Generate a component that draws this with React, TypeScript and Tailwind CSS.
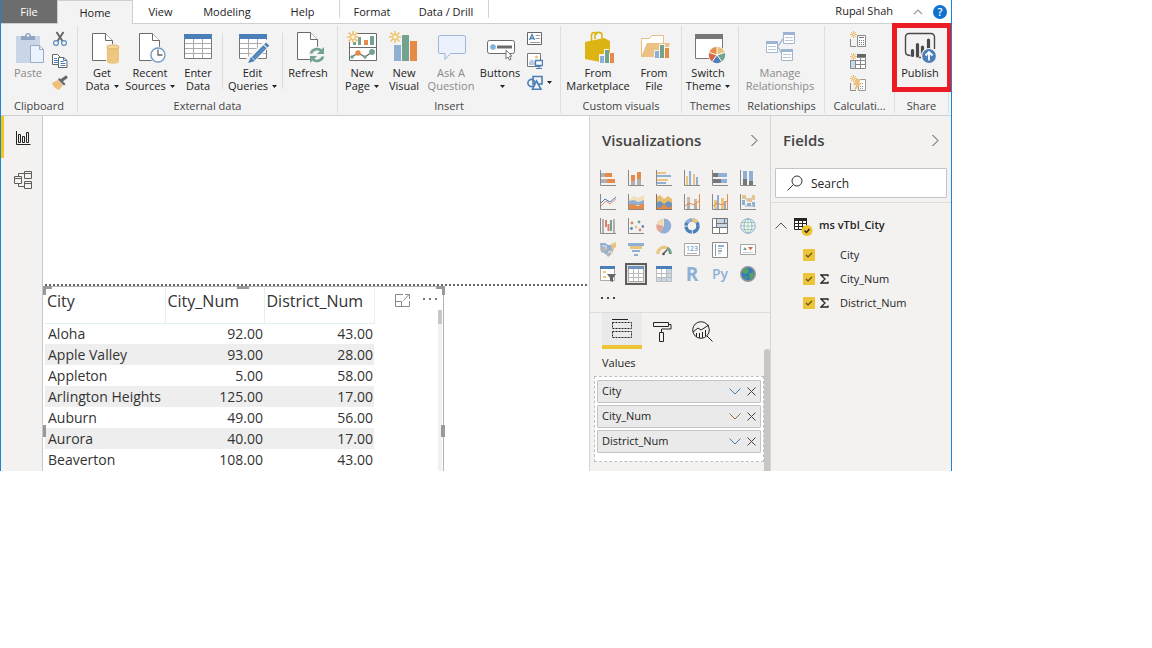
import type { ReactNode } from "react";

type Kids = { children: ReactNode };

const BLUE = "#4a7fb8";
const SKY = "#8fb0d4";
const GREEN = "#73a38f";
const ORANGE = "#e58b47";
const SAND = "#ecc47e";

/* ---------- icon helpers ---------- */

function Big({ children }: Kids) {
  return (
    <svg viewBox="0 0 36 36" className="-mb-px h-9 w-9 shrink-0" fill="none" aria-hidden="true">
      {children}
    </svg>
  );
}

function Small({ children }: Kids) {
  return (
    <svg viewBox="0 0 16 16" className="h-4 w-4 shrink-0" fill="none" aria-hidden="true">
      {children}
    </svg>
  );
}

function Caret() {
  return (
    <svg viewBox="0 0 5 3" className="mb-0.5 ml-1 inline h-[3px] w-[5px]" aria-hidden="true">
      <path d="M0 0h5L2.5 3z" fill="#222" />
    </svg>
  );
}

function Sun({ x, y }: { x: number; y: number }) {
  return (
    <g transform={`translate(${x} ${y})`} stroke="#eec26d" strokeWidth="1.6">
      <path d="M0-6v3.4M0 2.6V6M-6 0h3.4M2.6 0H6M-4.4-4.4l2.4 2.4M2 2l2.4 2.4M-4.4 4.4L-2 2M2-2l2.4-2.4" />
      <circle r="2.3" fill="#fff6e2" strokeWidth="1.2" />
    </g>
  );
}

function TinySun() {
  return (
    <g stroke="#eeb868" strokeWidth="1">
      <path d="M3.5 0v2M3.5 5v2M0 3.5h2M5 3.5h2M1 1l1.5 1.5M4.5 4.5L6 6M1 6l1.5-1.5M4.5 2.5L6 1" />
      <circle cx="3.5" cy="3.5" r="1.2" />
    </g>
  );
}

function Page({ x, y }: { x: number; y: number }) {
  return (
    <g transform={`translate(${x} ${y})`} stroke="#6b6b6b">
      <path d="M.5.5h13l7 7v20H.5z" fill="#fff" />
      <path d="M13.5.5v7h7" fill="#fff" />
    </g>
  );
}

function Grid() {
  return (
    <>
      <path d="M4.5 3.5h27v24h-27z" fill="#fff" stroke="#777" />
      <path d="M5 12.5h26M5 17.5h26M5 22.5h26M13.5 8v19M22.5 8v19" stroke="#aaa" />
      <path d="M4 3h28v5H4z" fill={BLUE} />
    </>
  );
}

/* ---------- ribbon icons ---------- */

const PasteIcon = (
  <Big>
    <path d="M6 5h24v27H6z" fill="#cad6e8" />
    <path d="M11 9V5h4c0-4 6-4 6 0h4v4z" fill="#8fa5c3" />
    <circle cx="18" cy="4.5" r="1.3" fill="#eef3fa" />
    <path d="M20.5 14.5h9l4 4v13h-13z" fill="#ebf2fd" stroke="#98abc8" />
    <path d="M29.5 14.5v4h4" stroke="#98abc8" />
  </Big>
);
const CutIcon = (
  <Small>
    <path d="M4.5 1l6.3 9.5M11.5 1L5.2 10.5" stroke="#666" strokeWidth="2" />
    <circle cx="4" cy="12" r="2.4" stroke="#5a8fc0" strokeWidth="1.2" fill="#f3f3f3" />
    <circle cx="12" cy="12" r="2.4" stroke="#5a8fc0" strokeWidth="1.2" fill="#f3f3f3" />
  </Small>
);
const CopyIcon = (
  <Small>
    <path d="M.5 1.5h5l3 3v7h-8z" fill="#fff" stroke="#666" />
    <path d="M2 5.5h3M2 7.5h4M2 9.5h4" stroke={BLUE} />
    <path d="M6.5 4.5h5l3.5 3v7H6.5z" fill="#fff" stroke="#666" />
    <path d="M11.5 4.5v3H15M8.5 8.5h3M8.5 10.5h5M8.5 12.5h5" stroke={BLUE} />
  </Small>
);
const BrushIcon = (
  <Small>
    <path d="M6 5L0 8c1 4 4 6 7 7l4-5z" fill="#eec07c" />
    <path d="M6 4.5l1.5-1.5 6 6L12 10.5z" fill="#666" />
    <path d="M9.5 5.5l5.5-4" stroke="#666" strokeWidth="3" />
  </Small>
);
const GetDataIcon = (
  <Big>
    <Page x={8} y={2} />
    <path d="M22 13h14v20H22z" fill="#f3f3f3" />
    <path d="M23 16v14.5c0 3 12 3 12 0V16z" fill="#edc67f" />
    <ellipse cx="29" cy="16" rx="6" ry="2" fill="#f5d79f" stroke="#e0b25f" />
  </Big>
);
const RecentIcon = (
  <Big>
    <Page x={7} y={2} />
    <circle cx="26" cy="24" r="8.5" fill="#f3f3f3" />
    <circle cx="26" cy="24" r="7" fill="#fff" stroke="#6d9ac6" strokeWidth="1.3" />
    <path d="M26 18.5V24h4.5" stroke="#666" strokeWidth="1.3" />
  </Big>
);
const EnterIcon = (
  <Big>
    <Grid />
  </Big>
);
const EditIcon = (
  <Big>
    <Grid />
    <path d="M13 31.5L34 11" stroke="#f3f3f3" strokeWidth="8" />
    <path d="M18.5 27.5L30 15.7" stroke={BLUE} strokeWidth="4.5" />
    <path d="M30.8 15l1.9-1.9" stroke={BLUE} strokeWidth="4.5" />
    <path d="M16 26l4 4-7 2z" fill={BLUE} />
    <path d="M20 26.5L29.5 17" stroke="#7ea6cf" />
  </Big>
);
const RefreshIcon = (
  <Big>
    <Page x={7} y={1} />
    <circle cx="27" cy="24" r="8.5" fill="#f3f3f3" />
    <path d="M21 22.5a6.2 6.2 0 0 1 10.5-2.5M33 25.5a6.2 6.2 0 0 1-10.5 2.5" stroke={GREEN} strokeWidth="2.6" />
    <path d="M34 16v7h-7zM20 32v-7h7z" fill={GREEN} />
  </Big>
);
const NewPageIcon = (
  <Big>
    <path d="M5.5 2.5h27v27h-27z" fill="#fff" stroke="#6b6b6b" />
    <path d="M6 16.5h26" stroke="#6b6b6b" />
    <path d="M14 6h3v8h-3zM26 5h4v9h-4zM9 11h3v3H9z" fill={GREEN} />
    <path d="M20 9h4v5h-4z" fill={ORANGE} />
    <path d="M8 26l6-4 7 4 7-5" stroke="#666" strokeWidth="1.2" />
    <circle cx="14" cy="22" r="2.7" fill={ORANGE} />
    <circle cx="28" cy="21" r="2.9" fill={GREEN} />
    <circle cx="8" cy="26" r="1.8" fill={GREEN} />
    <circle cx="21" cy="26" r="1.8" fill={GREEN} />
    <circle cx="8" cy="5.5" r="6" fill="#f3f3f3" />
    <Sun x={9} y={6} />
  </Big>
);
const NewVisualIcon = (
  <Big>
    <path d="M8 14h7v16H8z" fill="#8fafd3" />
    <path d="M16 4h7v26h-7z" fill={GREEN} />
    <path d="M24 10h7v20h-7z" fill={ORANGE} />
    <Sun x={9} y={6} />
  </Big>
);
const AskIcon = (
  <Big>
    <path d="M7 4.5h24a1.5 1.5 0 0 1 1.5 1.5v15a1.5 1.5 0 0 1-1.5 1.5H17.5L12 28.5v-6H7A1.5 1.5 0 0 1 5.5 21V6A1.5 1.5 0 0 1 7 4.5z" fill="#ebf2fd" stroke="#9fb5d6" />
  </Big>
);
const ButtonsIcon = (
  <Big>
    <rect x="5.5" y="9.5" width="27" height="13" rx="2" fill="#fff" stroke="#6b6b6b" />
    <circle cx="11" cy="16" r="2.8" fill="#7fb0da" />
    <path d="M15 14.5h15v3H15z" fill="#6b6b6b" />
    <path d="M24 19v9l2-2 1.5 3 1.5-.8-1.5-3H30z" fill="#fff" stroke="#777" />
  </Big>
);
const TextBoxIcon = (
  <Small>
    <path d="M.5 1.5h14v12H.5z" fill="#fff" stroke="#666" />
    <path d="M2.5 9L5 3.5 7.5 9M3.5 7.5h3" stroke={BLUE} strokeWidth="1.3" />
    <path d="M8.5 4.5H13M8.5 7.5H13M3 11.5h10" stroke="#999" />
  </Small>
);
const ImageIcon = (
  <Small>
    <path d="M.5.5h13v13H.5z" fill="#fff" stroke="#777" />
    <path d="M2 12V9l2.5-3L8 9v3z" fill="#bccbe0" />
    <circle cx="9.5" cy="4" r="1.5" fill="#eec07c" />
    <path d="M8.5 7.5h7v5h-7z" fill="#fff" stroke={BLUE} strokeWidth="1.4" />
    <path d="M12 13v2M9 15.5h6" stroke={BLUE} />
  </Small>
);
const ShapesIcon = (
  <Small>
    <path d="M6 1.5h9v7.5H6z" stroke={BLUE} strokeWidth="1.6" />
    <circle cx="4.5" cy="8" r="3.6" stroke={BLUE} strokeWidth="1.6" />
    <path d="M9.5 6l4.5 8.2H5.5z" fill="#f3f3f3" stroke={BLUE} strokeWidth="1.6" />
  </Small>
);
const MarketIcon = (
  <Big>
    <path d="M11.5 10V4.5c0-4 5-4 5-.5M15 8V4c0-3.5 7-3.5 7 0v4" stroke="#dcb414" strokeWidth="1.6" />
    <path d="M5 11l19-4 6 3v15l-10 6-15-3z" fill="#dcb414" />
    <path d="M19 23h5v-5h5v4h6v11H19z" fill="#f3f3f3" />
    <path d="M20 25h4v7h-4z" fill={SKY} />
    <path d="M25 19h4v13h-4z" fill={GREEN} />
    <path d="M30 22h4v10h-4z" fill={ORANGE} />
  </Big>
);
const FileIcon = (
  <Big>
    <path d="M5.5 25.5v-18h8l2-3h12v21z" fill="#fff" stroke="#e9c083" />
    <path d="M5 26l6-14h23l-4 14z" fill="#ebc184" />
    <path d="M18 19h5v-6h6v3h5v12H18z" fill="#f3f3f3" />
    <path d="M19 20h4v7h-4z" fill={SKY} />
    <path d="M24 14h4v13h-4z" fill={GREEN} />
    <path d="M29 17h4v10h-4z" fill={ORANGE} />
  </Big>
);
const ThemeIcon = (
  <Big>
    <path d="M5.5 3.5h27v24h-27z" fill="#fff" stroke="#777" />
    <path d="M5 3h28v5H5z" fill="#777" />
    <circle cx="27" cy="24" r="9" fill="#f3f3f3" />
    <path d="M27 24v-8a8 8 0 0 1 7.6 5.5z" fill="#e9c07c" />
    <path d="M27 24l7.6-2.5a8 8 0 0 1-2.9 9z" fill={GREEN} />
    <path d="M27 24l4.7 6.5a8 8 0 0 1-9.4 0z" fill={BLUE} />
    <path d="M27 24l-4.7 6.5a8 8 0 0 1-2.9-9z" fill="#d9664a" />
    <path d="M27 24l-7.6-2.5A8 8 0 0 1 27 16z" fill={ORANGE} />
    <path d="M27 24v-8M27 24l7.6-2.5M27 24l4.7 6.5M27 24l-4.7 6.5M27 24l-7.6-2.5" stroke="#fff" />
  </Big>
);
const RelIcon = (
  <Big>
    <path d="M16 15l5-7M16 16l4 7" stroke="#a5b9d6" strokeWidth="1.4" />
    {[[4, 10], [21, 1], [19, 18]].map(([x, y]) => (
      <g key={x} transform={`translate(${x} ${y})`}>
        <path d="M.5.5h11v11H.5z" fill="#fff" stroke="#a5b5cc" />
        <path d="M0 0h12v3H0z" fill="#9db4d3" />
        <path d="M2 5.5h8M2 8.5h8" stroke="#b8c6da" />
      </g>
    ))}
  </Big>
);
const MeasureIcon = (
  <Small>
    <path d="M.5 8v7.5H6" stroke="#888" />
    <path d="M7.5 4.5h8v11h-8z" fill="#fff" stroke="#888" />
    <path d="M9 6.5h5" stroke="#777" />
    <path d="M9 9.5h5M9 11.5h5M9 13.5h5" stroke="#777" strokeDasharray="1 1" />
    <TinySun />
  </Small>
);
const ColumnIcon = (
  <Small>
    <path d="M.5 4.5h15v11H.5z" fill="#fff" stroke="#888" />
    <path d="M1 7h5v8H1z" fill="#c5daee" />
    <path d="M5.5 7v8M10.5 4v11M1 7.5h14M6 11.5h9" stroke="#888" />
    <path d="M7 1h9v3H7z" fill="#666" />
    <path d="M0 0h7v7H0z" fill="#f3f3f3" />
    <TinySun />
  </Small>
);
const QuickIcon = (
  <Small>
    <path d="M.5 8v7.5H6" stroke="#888" />
    <path d="M8.5 4.5h7v11h-7z" fill="#fff" stroke="#999" />
    <path d="M10 8.5h4M10 11.5h4M10 13.5h4" stroke="#999" strokeDasharray="1 1" />
    <path d="M6 4h5L9 8h3l-8 8 2-6H3z" fill="#eec07c" />
    <TinySun />
  </Small>
);
const PublishIcon = (
  <Big>
    <path d="M19 26.5h-2M8.5 24.5c-3 0-5-1.5-5-4V6a3.5 3.5 0 0 1 3.5-3.5h22A3.5 3.5 0 0 1 32.5 6v12" stroke="#4a4a4a" strokeWidth="1.4" />
    <path d="M10.5 19.5v5M15.5 13.5V25M20.5 16v6.5M26.5 9v9" stroke="#4a4a4a" strokeWidth="3.2" strokeLinecap="round" />
    <circle cx="27" cy="25" r="8" fill="#f3f3f3" />
    <circle cx="27" cy="25" r="6.9" fill={BLUE} />
    <path d="M27 29.5v-8M23.5 24.5L27 21l3.5 3.5" stroke="#fff" strokeWidth="1.8" />
  </Big>
);

/* ---------- ribbon ---------- */

function RibbonButton({ icon, lines, caret, width, muted }: { icon: ReactNode; lines: string[]; caret?: boolean; width: string; muted?: boolean }) {
  return (
    <button type="button" className={`flex shrink-0 flex-col items-center whitespace-nowrap text-[11px] leading-[13px] ${width} ${muted ? "text-[#8a8a8a]" : "text-[#222]"}`}>
      {icon}
      {lines.map((l, i) => (
        <span key={i} className="block h-[13px]">
          {l}
          {caret && i === lines.length - 1 && <Caret />}
        </span>
      ))}
    </button>
  );
}

function Group({ label, width, inset = "", children }: Kids & { label: string; width: string; inset?: string }) {
  return (
    <section className={`relative flex shrink-0 flex-col pt-[7px] ${width}`}>
      <div className={`flex h-[68px] items-start ${inset}`}>{children}</div>
      <h2 className="text-center text-[11px] leading-[14px] whitespace-nowrap text-[#444]">{label}</h2>
    </section>
  );
}

function GroupRule() {
  return <div className="my-0.5 w-px shrink-0 bg-[#dfdfdf]" />;
}

function InnerRule() {
  return <div className="mt-0.5 h-14 w-px shrink-0 bg-[#dcdcdc]" />;
}

function IconStack({ items }: { items: [string, ReactNode][] }) {
  return (
    <div className="flex flex-col gap-1.5">
      {items.map(([name, icon]) => (
        <button key={name} type="button" aria-label={name} className="flex h-4 items-center">
          {icon}
        </button>
      ))}
    </div>
  );
}

function Ribbon() {
  return (
    <div className="flex h-[92px] overflow-x-clip border-b border-[#cfcfcf] bg-[#f3f3f3]">
      <Group label="Clipboard" width="w-[76px]" inset="pl-[3px]">
        <RibbonButton icon={PasteIcon} lines={["Paste"]} width="w-12" muted />
        <IconStack items={[["Cut", CutIcon], ["Copy", CopyIcon], ["Format painter", BrushIcon]]} />
      </Group>
      <GroupRule />
      <Group label="External data" width="w-[259px]">
        <RibbonButton icon={GetDataIcon} lines={["Get", "Data"]} caret width="w-12" />
        <RibbonButton icon={RecentIcon} lines={["Recent", "Sources"]} caret width="w-12" />
        <RibbonButton icon={EnterIcon} lines={["Enter", "Data"]} width="w-12" />
        <InnerRule />
        <RibbonButton icon={EditIcon} lines={["Edit", "Queries"]} caret width="w-[59px]" />
        <InnerRule />
        <RibbonButton icon={RefreshIcon} lines={["Refresh"]} width="w-[50px]" />
      </Group>
      <GroupRule />
      <Group label="Insert" width="w-[222px]" inset="pl-0.5">
        <RibbonButton icon={NewPageIcon} lines={["New", "Page"]} caret width="w-11" />
        <RibbonButton icon={NewVisualIcon} lines={["New", "Visual"]} width="w-10" />
        <RibbonButton icon={AskIcon} lines={["Ask A", "Question"]} width="w-[54px]" muted />
        <RibbonButton icon={ButtonsIcon} lines={["Buttons", ""]} caret width="w-11" />
        <div className="pl-[5px]">
          <IconStack
            items={[
              ["Text box", TextBoxIcon],
              ["Image", ImageIcon],
              ["Shapes", <span key="s" className="flex items-center">{ShapesIcon}<Caret /></span>],
            ]}
          />
        </div>
      </Group>
      <GroupRule />
      <Group label="Custom visuals" width="w-[120px]" inset="pl-[3px]">
        <RibbonButton icon={MarketIcon} lines={["From", "Marketplace"]} width="w-[68px]" />
        <RibbonButton icon={FileIcon} lines={["From", "File"]} width="w-11" />
      </Group>
      <GroupRule />
      <Group label="Themes" width="w-14">
        <RibbonButton icon={ThemeIcon} lines={["Switch", "Theme"]} caret width="w-[52px]" />
      </Group>
      <GroupRule />
      <Group label="Relationships" width="w-[85px]" inset="pl-px">
        <RibbonButton icon={RelIcon} lines={["Manage", "Relationships"]} width="w-20" muted />
      </Group>
      <GroupRule />
      <Group label="Calculati..." width="w-[69px]" inset="pl-[25px]">
        <IconStack items={[["New measure", MeasureIcon], ["New column", ColumnIcon], ["New quick measure", QuickIcon]]} />
      </Group>
      <GroupRule />
      <Group label="Share" width="w-[53px]" inset="pl-px">
        <RibbonButton icon={PublishIcon} lines={["Publish"]} width="w-12" />
        <div className="pointer-events-none absolute -top-px -right-1 h-[69px] w-[60px] border-[5px] border-[#ed1c24]" />
      </Group>
      <GroupRule />
    </div>
  );
}

function TabBar() {
  const tab = "h-[23px] text-[11px] leading-[23px] text-[#222] whitespace-nowrap text-center";
  return (
    <nav className="flex h-6 border-b border-[#cfcfcf] bg-white">
      <button type="button" className="h-[23px] w-14 bg-[#6d6d6d] text-center text-[11px] leading-[23px] text-white">File</button>
      <button type="button" className="h-6 w-[76px] border-x border-t border-[#cfcfcf] bg-[#f3f3f3] text-center text-[11px] leading-[22px] text-[#222]">Home</button>
      <button type="button" className={`${tab} w-[55px]`}>View</button>
      <button type="button" className={`${tab} w-[78px]`}>Modeling</button>
      <button type="button" className={`${tab} w-[73px]`}>Help</button>
      <div className="h-[18px] w-px bg-[#d4d4d4]" />
      <button type="button" className={`${tab} w-[64px]`}>Format</button>
      <button type="button" className={`${tab} w-[84px]`}>Data / Drill</button>
      <div className="h-[18px] w-px bg-[#d4d4d4]" />
      <div className="ml-auto flex items-center pr-1">
        <span className="text-[11px] whitespace-nowrap text-[#222]">Rupal Shah</span>
        <button type="button" aria-label="Collapse ribbon" className="ml-5">
          <svg viewBox="0 0 10 6" className="h-1.5 w-2.5" fill="none"><path d="M1 5l4-4 4 4" stroke="#9a9a9a" strokeWidth="1.2" /></svg>
        </button>
        <button type="button" aria-label="Help" className="ml-2.5 h-3.5 w-3.5 rounded-full bg-[#0f72cf] text-center text-[11px] leading-[14px] font-semibold text-white">?</button>
      </div>
    </nav>
  );
}

/* ---------- left rail ---------- */

function Rail() {
  return (
    <aside className="flex w-[42px] shrink-0 flex-col border-r border-[#c8c8c8] bg-[#f3f2f1]">
      <button type="button" aria-label="Report" className="flex h-[42px] items-center justify-center border-l-[3px] border-[#f2c811] pt-0.5">
        <svg viewBox="0 0 16 16" className="h-4 w-4" fill="none" stroke="#252423">
          <path d="M1.5 1v13.5H15.5M3.5 4.5h2v8h-2zM7.5 6.5h2v6h-2zM11.5 2.5h2v10h-2z" />
        </svg>
      </button>
      <button type="button" aria-label="Model" className="flex h-[42px] items-center justify-center pt-0.5 pl-0.5">
        <svg viewBox="0 0 18 18" className="h-[18px] w-[18px]" fill="none" stroke="#605e5c">
          <path d="M.5 5.5h7v7h-7zM.5 7.5h7M10.5.5h7v7h-7zM10.5 2.5h7M10.5 10.5h7v7h-7zM10.5 12.5h7M4.5 5.5v-3h6M4.5 12.5v3h6" />
        </svg>
      </button>
    </aside>
  );
}

/* ---------- canvas ---------- */

const rows: [string, string, string][] = [
  ["Aloha", "92.00", "43.00"],
  ["Apple Valley", "93.00", "28.00"],
  ["Appleton", "5.00", "58.00"],
  ["Arlington Heights", "125.00", "17.00"],
  ["Auburn", "49.00", "56.00"],
  ["Aurora", "40.00", "17.00"],
  ["Beaverton", "108.00", "43.00"],
];

function Canvas() {
  return (
    <main className="flex min-w-0 flex-1 flex-col bg-white">
      <div className="min-h-[168px] flex-1" />
      <div className="ml-0.5 h-0.5 bg-[repeating-linear-gradient(90deg,#666_0px,#666_2px,transparent_2px,transparent_4px)]" />
      <div className="relative flex w-[401px] border-t border-r border-[#b3b3b3] pb-px pl-0.5 text-[#333]">
        <table className="table-fixed border-collapse text-[14px] leading-[20px]">
          <colgroup>
            <col className="w-[120px]" />
            <col className="w-[99px]" />
            <col className="w-[110px]" />
          </colgroup>
          <thead>
            <tr className="h-9 text-left align-top text-[16px]">
              {["City", "City_Num", "District_Num"].map((h) => (
                <th key={h} scope="col" className="border-r border-b border-[#e3f1ee] pt-1 pr-0 pl-0.5 font-normal">{h}</th>
              ))}
            </tr>
          </thead>
          <tbody>
            {rows.map(([city, a, b], i) => (
              <tr key={city} className={`h-[21px] ${i % 2 ? "bg-[#eeeeee]" : "bg-white"}`}>
                <td className="p-0 pl-[3px] whitespace-nowrap">{city}</td>
                <td className="p-0 pr-px text-right">{a}</td>
                <td className="p-0 pr-px text-right">{b}</td>
              </tr>
            ))}
          </tbody>
        </table>
        <div className="flex flex-1 justify-end gap-3 pt-1.5 pr-[5px]">
          <button type="button" aria-label="Focus mode" className="h-3.5 w-[15px]">
            <svg viewBox="0 0 15 13" className="h-[13px] w-[15px]" fill="none" stroke="#8a8a8a">
              <path d="M8 .5H.5v12h14V7M.5 7.5h6v5M8.5 6.5l5.5-6M10 .5h4.5V5" />
            </svg>
          </button>
          <button type="button" aria-label="More options" className="h-3.5 w-4">
            <svg viewBox="0 0 16 12" className="h-3 w-4" fill="#777"><path d="M1 4h2v2H1zM7 4h2v2H7zM13 4h2v2h-2z" /></svg>
          </button>
        </div>
        <div className="absolute top-[23px] right-px bottom-0 w-1 bg-[#f1f1f1]"><div className="h-3.5 bg-[#c8c8c8]" /></div>
        <div className="absolute -top-px left-0 h-[9px] w-[9px] border-t-[3px] border-l-[3px] border-[#999]" />
        <div className="absolute -top-px -right-0.5 h-[9px] w-[9px] border-t-[3px] border-r-[3px] border-[#999]" />
        <div className="absolute -top-px left-1/2 h-[3px] w-3 -translate-x-1/2 bg-[#999]" />
        <div className="absolute top-[138px] left-0 h-3 w-[3px] bg-[#999]" />
        <div className="absolute top-[138px] -right-0.5 h-3 w-1 bg-[#999]" />
      </div>
    </main>
  );
}

/* ---------- visualizations ---------- */

const axis = <path d="M.5 0v15.5H16" stroke="#8a8a8a" />;

const visuals: [string, ReactNode][] = [
  ["Stacked bar chart", <>{axis}<path d="M1 3h4v4H1zM1 9h6v4H1z" fill="#b0b0b0" /><path d="M5 3h7v4H5zM7 9h8v4H7z" fill={ORANGE} /></>],
  ["Stacked column chart", <>{axis}<path d="M3 11h4v4H3zM9 9h4v6H9z" fill="#b0b0b0" /><path d="M3 5h4v6H3zM9 2h4v7H9z" fill={ORANGE} /></>],
  ["Clustered bar chart", <>{axis}<path d="M1 2h9v2H1zM1 9h11v2H1z" fill={SAND} /><path d="M1 5h14v2H1zM1 12h9v2H1z" fill={SKY} /></>],
  ["Clustered column chart", <>{axis}<path d="M2 6h2v9H2zM9 4h2v11H9z" fill={SAND} /><path d="M5 1h2v14H5zM12 7h2v8h-2z" fill={SKY} /></>],
  ["100% stacked bar chart", <>{axis}<path d="M1 3h5v4H1zM1 9h8v4H1z" fill="#777" /><path d="M6 3h9v4H6zM9 9h6v4H9z" fill={SKY} /></>],
  ["100% stacked column chart", <>{axis}<path d="M3 9h4v6H3zM9 11h4v4H9z" fill="#777" /><path d="M3 1h4v8H3zM9 1h4v10H9z" fill={SKY} /></>],
  ["Line chart", <>{axis}<path d="M1 9l4-4 5 3 6-5" stroke={BLUE} /><path d="M1 12l5-5 4 3 6-5" stroke="#e2907f" /></>],
  ["Area chart", <>{axis}<path d="M1 6l5-4 4 2 6-3v6H1z" fill="#f0dfb8" /><path d="M1 10V7l5-1 4 2 6-2v5H1z" fill={SKY} /><path d="M1 15v-4l4-1 5 2 6-3v6z" fill="#e58b47" /></>],
  ["Stacked area chart", <><path d="M0 16V3l4-2 4 4 4-3 4 3v11z" fill="#e9bd6d" /><path d="M0 16V9l4-2 4 3 4-3 4 2v7z" fill="#6d94be" /><path d="M0 15v-3l4 2 4-4 4 4 4-2v3z" fill={ORANGE} /><path d="M.5 0v15.5H16" stroke="#777" /></>],
  ["Line and stacked column", <>{axis}<path d="M3 9h3v6H3zM10 10h3v5h-3z" fill="#b0b0b0" /><path d="M3 3h3v6H3zM10 5h3v5h-3z" fill="#ccb9a6" /><path d="M1 12l4-3 5 2 5-4M15.5 0v15" stroke={ORANGE} /></>],
  ["Line and clustered column", <>{axis}<path d="M2 6h3v9H2zM9 4h3v11H9z" fill={SAND} /><path d="M5 1h2v14H5zM12 7h2v8h-2z" fill={SKY} /><path d="M1 12l4-3 5 2 5-4M15.5 0v15" stroke={ORANGE} /></>],
  ["Ribbon chart", <>{axis}<path d="M2 1h4v4H2zM8 4h4v4H8zM12 1h3v5h-3z" fill={SAND} /><path d="M2 6h3v5H2zM7 9h4v4H7zM12 8h3v5h-3z" fill={SKY} /><path d="M5 2l3 3v3L5 5zM11 4l2-2v3l-2 3zM5 10l2 2h4l2-2v3H5z" fill="#c6ccd2" /></>],
  ["Waterfall chart", <>{axis}<path d="M2 1h2v14H2zM13 1h2v14h-2z" fill="#b0b0b0" /><path d="M5 2h2v7H5zM7.5 6h2v7h-2z" fill="#db7f70" /><path d="M10 2h2v11h-2z" fill={GREEN} /></>],
  ["Scatter chart", <>{axis}<g fill="#db8570"><circle cx="4" cy="5" r="1.4" /><circle cx="12" cy="12" r="1.4" /></g><g fill="#5b88ba"><circle cx="3.5" cy="10.5" r="1.4" /><circle cx="15" cy="8.5" r="1.4" /></g><circle cx="8" cy="9" r="1.4" fill={SAND} /><circle cx="11" cy="4" r="1.4" fill={GREEN} /></>],
  ["Pie chart", <><path d="M8 8V.5A7.5 7.5 0 1 1 4 14.5z" fill={SKY} /><path d="M8 8l-4 6.5A7.5 7.5 0 0 1 .7 6z" fill="#e3a596" /><path d="M7.5 7.5L.8 5.5A7.5 7.5 0 0 1 7.5.5z" fill="#f0dbb0" /></>],
  ["Donut chart", <><circle cx="8" cy="8" r="6" stroke={BLUE} strokeWidth="3.5" strokeDasharray="8.4 1 8.4 1" /><path d="M8.5 2a6 6 0 0 1 4.5 2.5" stroke={SAND} strokeWidth="3.5" /><path d="M3 5a6 6 0 0 1 4-3" stroke={SKY} strokeWidth="3.5" /></>],
  ["Treemap", <><path d="M.5.5h15v15H.5z" fill="#fff" /><path d="M5 1h10v8H5z" fill="#c9d6e6" /><path d="M.5.5h15v15H.5zM.5 9.5h15M4.5.5v9M12.5.5v5M4.5 5.5h11M7.5 9.5v6" stroke="#777" /></>],
  ["Map", <><circle cx="8" cy="8" r="7.3" fill="#f3faf8" stroke={SKY} /><path d="M8 1v14M1 8h14M2 4.5h12M2 11.5h12" stroke="#a5c9bd" /><ellipse cx="8" cy="8" rx="4" ry="7" stroke="#8ab5b5" /></>],
  ["Filled map", <><path d="M0 1h5l3 2h5l-1 5-3 2-1 4-4-3-3-1z" fill={SKY} /><path d="M0 6l4-1 4 2-3 3-4-1zM9 8l5-1-2 5-4 3-2-3z" fill="#b5b5b5" /><path d="M11 2l5-2v5l-4 3z" fill={SAND} /><path d="M2 4h4v3M8 10h4v3" stroke="#eee" /></>],
  ["Funnel", <><path d="M0 1h16v3H0zM4 8h8v2H4zM6 12h4v2H6z" fill={SKY} /><path d="M2 4h12v3H2z" fill={SAND} /></>],
  ["Gauge", <><path d="M1.8 12a6.3 6.3 0 0 1 9-6" stroke={SAND} strokeWidth="3" /><path d="M11 6a6.3 6.3 0 0 1 3.3 6" stroke={GREEN} strokeWidth="3" /><path d="M7 12l4-4" stroke="#555" strokeWidth="1.5" /><circle cx="7.5" cy="12" r="1.3" fill="#555" /></>],
  ["Card", <><path d="M.5 1.5h15v12H.5z" fill="#fff" stroke="#a5a5a5" /><text x="8" y="8.500" fontSize="7" textAnchor="middle" fill={BLUE}>123</text><path d="M3 11.5h10" stroke="#aaa" /></>],
  ["Multi-row card", <><path d="M.5.5h15v15H.5z" fill="#fff" stroke="#8a8a8a" /><path d="M3.5 2v12" stroke="#999" /><path d="M6 3h6v2H6zM6 8h4v2H6z" fill={SKY} /><path d="M6 6.5h4M6 11.5h3" stroke="#bbb" /></>],
  ["KPI", <><path d="M.5 2.5h15v10H.5z" fill="#fff" stroke="#a5a5a5" /><path d="M3 8l2-3 2 3z" fill={GREEN} /><path d="M8 5h5l-2.5 3.5z" fill="#d4705f" /><path d="M3 10.5h10" stroke="#ccc" /></>],
  ["Slicer", <><path d="M.5 1.5h14v13H.5z" fill="#fff" stroke="#aaa" /><path d="M0 0h15v3H0z" fill={BLUE} /><path d="M3 5h3v2H3zM3 10h3v2H3z" fill={SAND} /><path d="M7 8h9l-3 4v4l-3-1v-3z" fill="#666" /></>],
  ["Table", <><path d="M.5.5h15v15H.5z" fill="#fff" stroke="#aaa" /><path d="M0 0h16v3H0z" fill="#6d94be" /><path d="M5.5 3v12M10.5 3v12M1 7.5h14M1 11.5h14" stroke="#bbb" /></>],
  ["Matrix", <><path d="M.5.5h15v15H.5z" fill="#fff" stroke="#bbb" /><path d="M11 3h4v12h-4zM1 12h14v3H1z" fill="#c9d6e6" /><path d="M0 0h16v3H0z" fill={BLUE} /><path d="M5.5 3v12M10.5 3v12M1 7.5h14M1 11.5h14" stroke="#bbb" /></>],
  ["R script visual", <span className="text-[19px] leading-4 font-bold text-[#8fb0d4]">R</span>],
  ["Python visual", <span className="text-[14px] leading-4 font-semibold text-[#8fb0d4]">Py</span>],
  ["ArcGIS map", <><circle cx="8" cy="8" r="7.2" fill="#347bb8" stroke="#999" strokeWidth="1.6" /><path d="M3 4l4-2 2 3-3 3-3-1zM9 8l4-2 1 4-4 4zM4 10l3 1v3z" fill="#55a65c" /></>],
];

function VisualGallery() {
  return (
    <div className="grid w-[168px] grid-cols-6 gap-y-0.5 pt-px">
      {visuals.map(([name, art], i) => (
        <button
          key={name}
          type="button"
          aria-label={name}
          className={`flex h-[22px] w-[22px] items-center justify-center ${name === "Table" ? "border-2 border-[#605e5c] bg-[#e1dfdd]" : ""}`}
        >
          {i === 27 || i === 28 ? art : <Small>{art}</Small>}
        </button>
      ))}
    </div>
  );
}

function PanelTitle({ title }: { title: string }) {
  return (
    <header className="flex h-[50px] items-center justify-between px-3 pb-0.5">
      <h2 className="text-[15px] font-semibold text-[#444]">{title}</h2>
      <button type="button" aria-label={`Collapse ${title}`}>
        <svg viewBox="0 0 7 13" className="h-[13px] w-[7px]" fill="none"><path d="M.5 1l5.5 5.5L.5 12" stroke="#444" /></svg>
      </button>
    </header>
  );
}

function Well({ name }: { name: string }) {
  return (
    <li className="flex h-[23px] items-center rounded-[1px] border border-[#c4c4c4] bg-[#eaeaea] pr-1 pl-1 text-[11px] text-[#252423]">
      <span className="flex-1">{name}</span>
      <button type="button" aria-label={`${name} options`} className="mr-1.5">
        <svg viewBox="0 0 12 7" className="h-[7px] w-3" fill="none"><path d="M.5.5L6 6 11.5.5" stroke={name === "City_Num" ? "#a06a3a" : "#4a7aa8"} /></svg>
      </button>
      <button type="button" aria-label={`Remove ${name}`}>
        <svg viewBox="0 0 9 9" className="h-[9px] w-[9px]" fill="none"><path d="M.5.5l8 8M8.5.5l-8 8" stroke="#444" /></svg>
      </button>
    </li>
  );
}

function Visualizations() {
  return (
    <section className="flex w-[181px] shrink-0 flex-col border-l border-[#d6d4d2] bg-[#f3f2f1]">
      <PanelTitle title="Visualizations" />
      <div className="h-[146px] pl-[7px]">
        <VisualGallery />
        <button type="button" aria-label="More visuals" className="mt-1 ml-[3px] block h-4 w-[18px]">
          <svg viewBox="0 0 16 12" className="h-3 w-4" fill="#444"><path d="M1 6h2v2H1zM7 6h2v2H7zM13 6h2v2h-2z" /></svg>
        </button>
      </div>
      <div className="flex border-t border-[#dedcda] pl-3">
        <button type="button" aria-label="Fields" className="flex h-9 w-10 items-center justify-center border-b-4 border-[#edc436] bg-[#eaeaea]">
          <svg viewBox="0 0 20 20" className="h-5 w-5" fill="none" stroke="#252423">
            <path d="M0 .5h16" />
            <path d="M.5 3.5h19v6H.5zM.5 12.5h19v6H.5z" strokeDasharray="2 1" />
          </svg>
        </button>
        <button type="button" aria-label="Format" className="flex h-9 w-10 items-center justify-center">
          <svg viewBox="0 0 19 21" className="h-[21px] w-[19px]" fill="none" stroke="#252423">
            <path d="M.5 1.5h15v4H.5zM15.500 3.500h2.500v4.500H8.500v3M6.500 11.500h4v9h-4z" />
          </svg>
        </button>
        <button type="button" aria-label="Analytics" className="flex h-9 w-10 items-center justify-center">
          <svg viewBox="0 0 21 21" className="h-[21px] w-[21px]" fill="none" stroke="#252423">
            <circle cx="9" cy="9" r="8.3" />
            <path d="M15 15l5.5 5.5M1 11l5-4 3 2 8-5M4.500 16v-4M7.500 17v-5M10.500 17v-6M13.500 15v-6" />
          </svg>
        </button>
      </div>
      <div className="flex flex-1">
        <div className="min-w-0 flex-1 pb-2 pl-1">
          <h3 className="pt-1.5 pl-2 text-[11px] leading-[16px] text-[#252423]">Values</h3>
          <ul className="mt-[5px] flex flex-col gap-0.5 border border-dashed border-[#bfbfbf] bg-white px-0.5 pt-[3px] pb-2">
            <Well name="City" />
            <Well name="City_Num" />
            <Well name="District_Num" />
          </ul>
        </div>
        <div className="w-1.5 rounded-t-full bg-[#c8c6c4]" />
      </div>
    </section>
  );
}

/* ---------- fields ---------- */

function Field({ id, label, sum }: { id: string; label: string; sum?: boolean }) {
  return (
    <li className="flex h-6 items-center pl-8">
      <span className="relative flex h-3 w-3">
        <input id={id} type="checkbox" defaultChecked className="h-3 w-3 appearance-none rounded-[1px] bg-[#edc436]" />
        <svg viewBox="0 0 12 12" className="pointer-events-none absolute inset-0 h-3 w-3" fill="none"><path d="M3 6l2 2 4-4" stroke="#5f4d10" strokeWidth="1.2" /></svg>
      </span>
      <span className="ml-1 flex w-[21px] pl-px">
        {sum && (
          <svg viewBox="0 0 9 10" className="h-2.5 w-[9px]" fill="none"><path d="M8 2.5V1H1l4 4-4 4h7V7.5" stroke="#252423" strokeWidth="1.3" /></svg>
        )}
      </span>
      <label htmlFor={id} className="pt-px text-[11px] text-[#252423]">{label}</label>
    </li>
  );
}

function Fields() {
  return (
    <section className="w-[181px] shrink-0 border-l border-[#d6d4d2] bg-[#f3f2f1]">
      <PanelTitle title="Fields" />
      <div className="border-b border-[#dedcda] px-1 pt-0.5 pb-1">
        <label className="flex h-[30px] items-center rounded-[1px] border border-[#c4c4c4] bg-white pl-[11px]">
          <svg viewBox="0 0 16 16" className="h-4 w-4 shrink-0" fill="none" stroke="#333"><circle cx="10" cy="6" r="5" /><path d="M6.3 9.7L.5 15.5" /></svg>
          <input type="search" aria-label="Search fields" placeholder="Search" className="ml-2 w-full min-w-0 bg-transparent pt-0.5 text-[12px] text-[#252423] outline-none placeholder:text-[#252423]" />
        </label>
      </div>
      <div className="flex h-10 items-center pt-1 pl-1">
        <button type="button" aria-label="Collapse table">
          <svg viewBox="0 0 12 7" className="h-[7px] w-3" fill="none"><path d="M.5 6.5L6 1l5.5 5.5" stroke="#555" /></svg>
        </button>
        <svg viewBox="0 0 20 20" className="mt-1 ml-1.5 h-5 w-5" fill="none" aria-hidden="true">
          <path d="M1.5 2.5h12v10h-12z" fill="#fff" stroke="#252423" />
          <path d="M1 1h13v3H1z" fill="#252423" />
          <path d="M1 6.5h13M1 9.5h13M5.5 4v9M9.5 4v9" stroke="#252423" />
          <circle cx="14" cy="13.5" r="5.5" fill="#edc436" />
          <path d="M11.5 13.5l2 2 3-3.5" stroke="#252423" strokeWidth="1.4" />
        </svg>
        <h3 className="ml-1.5 text-[11px] font-semibold text-[#252423]">ms vTbl_City</h3>
      </div>
      <ul>
        <Field id="f-city" label="City" />
        <Field id="f-citynum" label="City_Num" sum />
        <Field id="f-district" label="District_Num" sum />
      </ul>
    </section>
  );
}

export default function App() {
  return (
    <div className="min-h-screen bg-white font-['Open_Sans','Noto_Sans',sans-serif]">
      <div className="w-full max-w-[952px] border-x border-[#1a84d8]">
        <TabBar />
        <Ribbon />
        <div className="flex">
          <Rail />
          <Canvas />
          <Visualizations />
          <Fields />
        </div>
      </div>
    </div>
  );
}
